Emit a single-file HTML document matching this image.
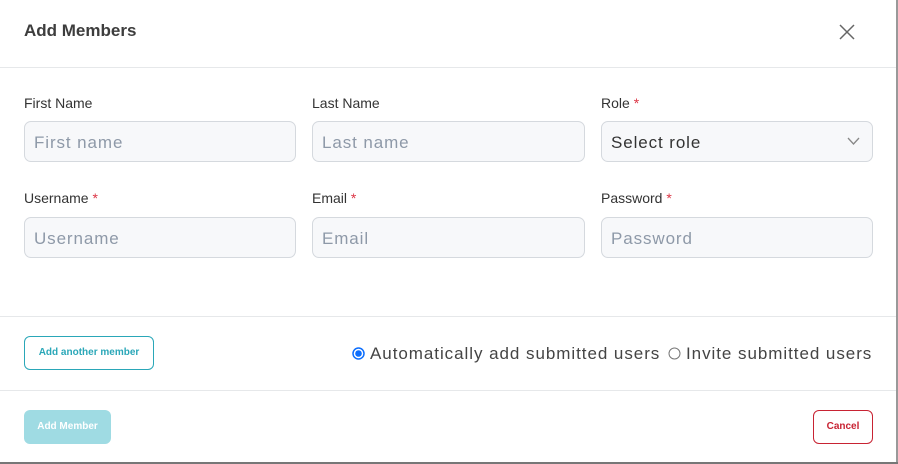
<!DOCTYPE html>
<html><head><style>
*{box-sizing:border-box;margin:0;padding:0}
body{width:898px;height:464px;background:#fff;font-family:"Liberation Sans",sans-serif;position:relative;overflow:hidden}
.a{position:absolute}
.title{left:24px;top:21px;font-size:17px;font-weight:bold;color:#3d3d3d}
.hr{left:0;width:896px;height:1px;background:#e6e8ea}
.lbl{font-size:14px;color:#333}
.lbl span{color:#dc3545}
.in{height:41px;border:1px solid #d5d9de;border-radius:7px;background:#f7f8fa;font-size:17px;color:#8e99a8;padding:11px 9px;letter-spacing:.9px}
.rad{font-size:17px;color:#444;top:344px;letter-spacing:.95px}
</style></head><body>
<div class="a title">Add Members</div>
<svg class="a" style="left:839px;top:24px" width="16" height="16"><path d="M1 1L15 15M15 1L1 15" stroke="#666" stroke-width="1.5"/></svg>
<div class="a hr" style="top:67px"></div>
<div class="a lbl" style="left:24px;top:95px">First Name</div>
<div class="a lbl" style="left:312px;top:95px">Last Name</div>
<div class="a lbl" style="left:601px;top:95px">Role <span>*</span></div>
<div class="a in" style="left:24px;top:121px;width:272px">First name</div>
<div class="a in" style="left:312px;top:121px;width:273px">Last name</div>
<div class="a in" style="left:601px;top:121px;width:272px;color:#333">Select role</div>
<svg class="a" style="left:847px;top:137px" width="13" height="9"><path d="M1 1L6.5 7L12 1" stroke="#888" stroke-width="1.3" fill="none"/></svg>
<div class="a lbl" style="left:24px;top:190px">Username <span>*</span></div>
<div class="a lbl" style="left:312px;top:190px">Email <span>*</span></div>
<div class="a lbl" style="left:601px;top:190px">Password <span>*</span></div>
<div class="a in" style="left:24px;top:217px;width:272px">Username</div>
<div class="a in" style="left:312px;top:217px;width:273px">Email</div>
<div class="a in" style="left:601px;top:217px;width:272px">Password</div>
<div class="a hr" style="top:316px"></div>
<div class="a" style="left:24px;top:336px;width:130px;height:34px;border:1px solid #2aa7b8;border-radius:6px;color:#2aa7b8;font-size:10px;font-weight:bold;text-align:center;line-height:32px">Add another member</div>
<svg class="a" style="left:352px;top:347px" width="13" height="13"><circle cx="6.5" cy="6.5" r="5.5" fill="#fff" stroke="#0d6efd" stroke-width="1.5"/><circle cx="6.5" cy="6.5" r="3.3" fill="#0d6efd"/></svg>
<div class="a rad" style="left:370px">Automatically add submitted users</div>
<svg class="a" style="left:668px;top:347px" width="13" height="13"><circle cx="6.5" cy="6.5" r="5.5" fill="#fff" stroke="#777" stroke-width="1"/></svg>
<div class="a rad" style="left:686px">Invite submitted users</div>
<div class="a hr" style="top:390px"></div>
<div class="a" style="left:24px;top:410px;width:87px;height:34px;background:#9fdbe3;border-radius:6px;color:#fff;font-size:10px;font-weight:bold;text-align:center;line-height:34px">Add Member</div>
<div class="a" style="left:813px;top:410px;width:60px;height:34px;border:1px solid #c82333;border-radius:6px;color:#c82333;font-size:10px;font-weight:bold;text-align:center;line-height:32px">Cancel</div>
<div class="a" style="left:896px;top:0;width:2px;height:464px;background:#999"></div>
<div class="a" style="left:0;top:462px;width:898px;height:2px;background:#777"></div>
</body></html>
